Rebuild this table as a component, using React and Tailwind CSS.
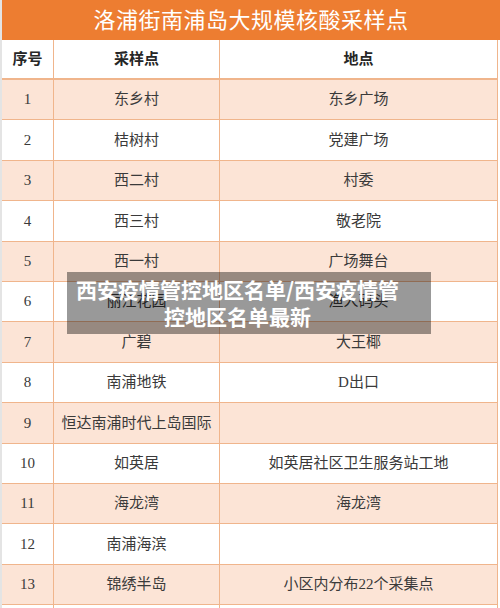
const rows = [
  ['1', '东乡村', '东乡广场'],
  ['2', '桔树村', '党建广场'],
  ['3', '西二村', '村委'],
  ['4', '西三村', '敬老院'],
  ['5', '西一村', '广场舞台'],
  ['6', '丽江花园', '渔人码头'],
  ['7', '广碧', '大王椰'],
  ['8', '南浦地铁', 'D出口'],
  ['9', '恒达南浦时代上岛国际', ''],
  ['10', '如英居', '如英居社区卫生服务站工地'],
  ['11', '海龙湾', '海龙湾'],
  ['12', '南浦海滨', ''],
  ['13', '锦绣半岛', '小区内分布22个采集点'],
  ['', '', ''],
]

const serif = { fontFamily: '"Liberation Serif", "Noto Sans CJK SC", serif' }

export default function App() {
  return (
    <div className="relative w-[500px] h-[608px] overflow-hidden bg-white border-l-2 border-[#e4e4e4]" style={serif}>
      {/* title bar */}
      <div className="h-[40px] bg-[#ed7d31] flex items-center justify-center text-white text-[22px] tracking-[0.5px]">
        洛浦街南浦岛大规模核酸采样点
      </div>

      <div className="w-[496px] border-r border-[#f0b58c]">
        {/* header */}
        <div className="grid grid-cols-[52px_166px_1fr] h-[40px] border-b-2 border-[#f0b58c] text-[15px] font-bold text-[#262626]">
          <div className="flex items-center justify-center border-r border-[#f0b58c]">序号</div>
          <div className="flex items-center justify-center border-r border-[#f0b58c]">采样点</div>
          <div className="flex items-center justify-center">地点</div>
        </div>

        {rows.map((r, i) => (
          <div
            key={i}
            className={`grid grid-cols-[52px_166px_1fr] h-[40.4px] border-b border-[#f0b58c] text-[15px] text-[#3a3a3a] ${
              i % 2 === 0 ? 'bg-[#fce4d6]' : 'bg-white'
            }`}
          >
            <div className="flex items-center justify-center border-r border-[#f0b58c]">{r[0]}</div>
            <div className="flex items-center justify-center border-r border-[#f0b58c] whitespace-nowrap">{r[1]}</div>
            <div className="flex items-center justify-center whitespace-nowrap">{r[2]}</div>
          </div>
        ))}
      </div>

      {/* watermark caption */}
      <div className="absolute left-[65px] top-[272px] w-[364px] h-[62px] bg-black/40 pl-[11px] pr-[34px] flex items-center justify-center">
        <p
          className="text-center text-white font-bold text-[21px] leading-[27px] whitespace-nowrap"
          style={{ fontFamily: '"Noto Sans CJK SC", "Noto Sans", sans-serif' }}
        >
          西安疫情管控地区名单/西安疫情管
          <br />
          控地区名单最新
        </p>
      </div>
    </div>
  )
}
